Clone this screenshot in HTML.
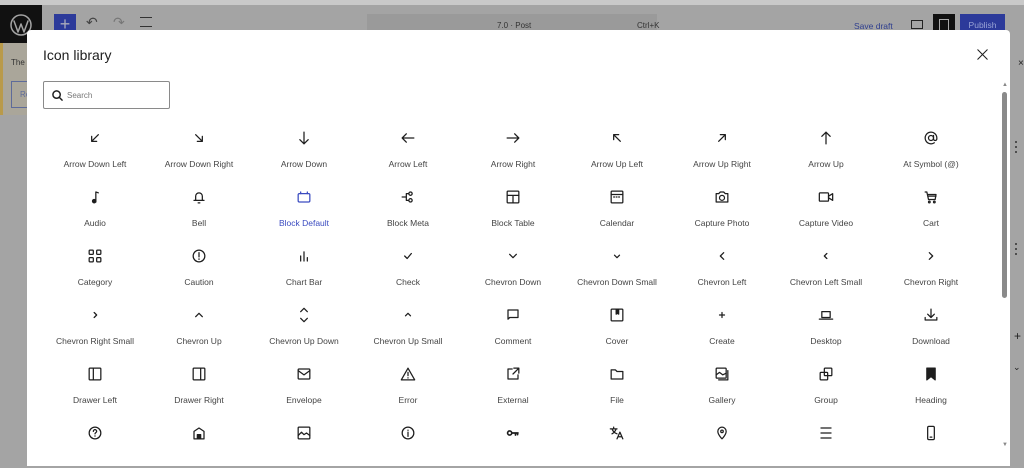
<!DOCTYPE html>
<html><head><meta charset="utf-8"><style>
*{margin:0;padding:0;box-sizing:border-box}
body{width:1024px;height:468px;overflow:hidden;background:#a4a4a4;font-family:"Liberation Sans",sans-serif;position:relative}
.abs{position:absolute}
.modal{position:absolute;left:27px;top:30px;width:983px;height:436px;background:#fff;border-radius:4px 4px 0 0}
.cell{position:absolute;width:104px;text-align:center}
.cell svg{display:block;margin:-2px auto 0;width:20px;height:20px}
.lbl{position:absolute;left:-10px;width:124px;top:29px;font-size:8.5px;color:#444;white-space:nowrap;text-align:center}
svg{fill:none;stroke:#1e1e1e;stroke-width:1.5;stroke-linecap:round;stroke-linejoin:round}
</style></head><body>
<div class="abs" style="left:0;top:0;width:1024px;height:5px;background:#c9c9c9"></div>
<div class="abs" style="left:0;top:5px;width:42px;height:38px;background:#111"></div>
<svg class="abs" style="left:9px;top:13px;width:24px;height:24px;stroke:#a4a4a4;stroke-width:1.5" viewBox="0 0 24 24"><circle cx="12" cy="12" r="10"/><path d="M5 8l4 11 3-8 3 8 4-11"/></svg>
<div class="abs" style="left:0;top:43px;width:42px;height:72px;background:#aaa69a"></div>
<div class="abs" style="left:0;top:43px;width:3px;height:72px;background:#b99a4a"></div>
<div class="abs" style="left:11px;top:58px;font-size:8px;color:#333">The</div>
<div class="abs" style="left:11px;top:81px;width:20px;height:27px;border:1px solid #5e6b9a;font-size:8px;color:#5e6b9a;padding:8px 0 0 8px">Re</div>
<div class="abs" style="left:54px;top:14px;width:22px;height:22px;background:#2c3a9a;color:#aab;font-size:18px;line-height:20px;text-align:center">+</div>
<div class="abs" style="left:86px;top:14px;font-size:14px;color:#444">↶</div>
<div class="abs" style="left:113px;top:14px;font-size:14px;color:#777">↷</div>
<div class="abs" style="left:140px;top:17px;width:12px;height:10px;border-top:1.5px solid #333;border-bottom:1.5px solid #333"></div>
<div class="abs" style="left:367px;top:14px;width:290px;height:24px;background:#9a9a9a"></div>
<div class="abs" style="left:497px;top:21px;font-size:8px;color:#333">7.0 · Post</div>
<div class="abs" style="left:637px;top:21px;font-size:8px;color:#333">Ctrl+K</div>
<div class="abs" style="left:854px;top:21px;font-size:8.5px;color:#2f3f8f">Save draft</div>
<div class="abs" style="left:911px;top:20px;width:12px;height:9px;border:1.5px solid #222"></div>
<div class="abs" style="left:933px;top:14px;width:22px;height:22px;background:#111"></div>
<div class="abs" style="left:939px;top:19px;width:10px;height:12px;border:1.5px solid #aaa"></div>
<div class="abs" style="left:960px;top:14px;width:45px;height:22px;background:#2c3a9a;color:#9aa4d6;font-size:8.5px;text-align:center;line-height:22px">Publish</div>
<div class="abs" style="left:1018px;top:58px;font-size:10px;color:#222">×</div>
<div class="modal">
<div class="abs" style="left:16px;top:17px;font-size:14px;color:#1e1e1e">Icon library</div>
<svg class="abs" style="left:950px;top:19px;width:11px;height:11px;stroke-width:1.3" viewBox="0 0 14 14"><path d="M1 1l12 12M13 1L1 13"/></svg>
<div class="abs" style="left:16px;top:51px;width:127px;height:28px;border:1px solid #8a8a8a;border-radius:2px"></div>
<svg class="abs" style="left:25px;top:60px;width:11px;height:11px;stroke-width:1.6" viewBox="0 0 12 12"><circle cx="5" cy="5" r="4"/><path d="M8 8l3 3"/></svg>
<div class="abs" style="left:40px;top:61px;font-size:8px;color:#777">Search</div>
<div class="abs" style="left:975px;top:52px;font-size:6px;color:#888">▲</div>
<div class="abs" style="left:975px;top:62px;width:5px;height:206px;background:#8a8a8a;border-radius:3px"></div>
<div class="abs" style="left:975px;top:412px;font-size:6px;color:#888">▼</div>
</div>
<svg class="abs" style="left:1014px;top:140px;width:4px;height:14px;stroke:none;fill:#333" viewBox="0 0 4 14"><circle cx="2" cy="2" r="1"/><circle cx="2" cy="7" r="1"/><circle cx="2" cy="12" r="1"/></svg>
<svg class="abs" style="left:1014px;top:242px;width:4px;height:14px;stroke:none;fill:#333" viewBox="0 0 4 14"><circle cx="2" cy="2" r="1"/><circle cx="2" cy="7" r="1"/><circle cx="2" cy="12" r="1"/></svg>
<div class="abs" style="left:1014px;top:329px;font-size:12px;color:#222">+</div>
<div class="abs" style="left:1013px;top:362px;font-size:9px;color:#222">⌄</div>

<div class="abs" style="left:27px;top:30px">
<div class="cell" style="left:16px;top:100px"><svg viewBox="0 0 24 24"><path d="M16 8L8 16M8 10v6h6"/></svg><div class="lbl">Arrow Down Left</div></div>
<div class="cell" style="left:120px;top:100px"><svg viewBox="0 0 24 24"><path d="M8 8l8 8M16 10v6h-6"/></svg><div class="lbl">Arrow Down Right</div></div>
<div class="cell" style="left:225px;top:100px"><svg viewBox="0 0 24 24"><path d="M12 5v14M7 14l5 5 5-5"/></svg><div class="lbl">Arrow Down</div></div>
<div class="cell" style="left:329px;top:100px"><svg viewBox="0 0 24 24"><path d="M19 12H5M10 7l-5 5 5 5"/></svg><div class="lbl">Arrow Left</div></div>
<div class="cell" style="left:434px;top:100px"><svg viewBox="0 0 24 24"><path d="M5 12h14M14 7l5 5-5 5"/></svg><div class="lbl">Arrow Right</div></div>
<div class="cell" style="left:538px;top:100px"><svg viewBox="0 0 24 24"><path d="M16 16L8 8M8 14V8h6"/></svg><div class="lbl">Arrow Up Left</div></div>
<div class="cell" style="left:643px;top:100px"><svg viewBox="0 0 24 24"><path d="M8 16l8-8M10 8h6v6"/></svg><div class="lbl">Arrow Up Right</div></div>
<div class="cell" style="left:747px;top:100px"><svg viewBox="0 0 24 24"><path d="M12 19V5M7 10l5-5 5 5"/></svg><div class="lbl">Arrow Up</div></div>
<div class="cell" style="left:852px;top:100px"><svg viewBox="0 0 24 24"><circle cx="12" cy="12" r="3"/><path d="M15 9v4a2 2 0 004 0v-1a7 7 0 10-3 5.7"/></svg><div class="lbl">At Symbol (@)</div></div>
<div class="cell" style="left:16px;top:159px"><svg viewBox="0 0 24 24"><path d="M13 18V6l3 1"/><circle cx="11" cy="17" r="2" fill="#1e1e1e"/></svg><div class="lbl">Audio</div></div>
<div class="cell" style="left:120px;top:159px"><svg viewBox="0 0 24 24"><path d="M8 16V11a4 4 0 018 0v5M6 16h12M11 19h2"/></svg><div class="lbl">Bell</div></div>
<div class="cell" style="left:225px;top:159px"><svg viewBox="0 0 24 24" style="stroke:#3a4bc0"><rect x="5" y="8" width="14" height="10" rx="1.5"/><path d="M8 6v2M16 6v2"/></svg><div class="lbl" style="color:#3a4bc0">Block Default</div></div>
<div class="cell" style="left:329px;top:159px"><svg viewBox="0 0 24 24"><path d="M5 12h5M10 8v8M10 8h3M10 16h3"/><circle cx="15" cy="8" r="2"/><circle cx="15" cy="16" r="2"/></svg><div class="lbl">Block Meta</div></div>
<div class="cell" style="left:434px;top:159px"><svg viewBox="0 0 24 24"><rect x="5" y="5" width="14" height="14" rx="1"/><path d="M5 10h14M12 10v9"/></svg><div class="lbl">Block Table</div></div>
<div class="cell" style="left:538px;top:159px"><svg viewBox="0 0 24 24"><rect x="5" y="5" width="14" height="14" rx="1"/><path d="M5 9h14M8 12h1M11 12h1M14 12h1"/></svg><div class="lbl">Calendar</div></div>
<div class="cell" style="left:643px;top:159px"><svg viewBox="0 0 24 24"><path d="M5 8h3l2-2h4l2 2h3v10H5z"/><circle cx="12" cy="13" r="3"/></svg><div class="lbl">Capture Photo</div></div>
<div class="cell" style="left:747px;top:159px"><svg viewBox="0 0 24 24"><rect x="4" y="7" width="11" height="10" rx="1"/><path d="M15 11l5-3v8l-5-3"/></svg><div class="lbl">Capture Video</div></div>
<div class="cell" style="left:852px;top:159px"><svg viewBox="0 0 24 24"><path d="M5 6h2l2 9h8l1-6H8M9 11h9"/><circle cx="10" cy="18" r="1"/><circle cx="16" cy="18" r="1"/></svg><div class="lbl">Cart</div></div>
<div class="cell" style="left:16px;top:218px"><svg viewBox="0 0 24 24"><rect x="5" y="5" width="5" height="5" rx="1"/><rect x="14" y="5" width="5" height="5" rx="1"/><rect x="5" y="14" width="5" height="5" rx="1"/><rect x="14" y="14" width="5" height="5" rx="1"/></svg><div class="lbl">Category</div></div>
<div class="cell" style="left:120px;top:218px"><svg viewBox="0 0 24 24"><circle cx="12" cy="12" r="7"/><path d="M12 8v5M12 15.5v.5"/></svg><div class="lbl">Caution</div></div>
<div class="cell" style="left:225px;top:218px"><svg viewBox="0 0 24 24"><path d="M8 12v6M12 7v11M16 14v4"/></svg><div class="lbl">Chart Bar</div></div>
<div class="cell" style="left:329px;top:218px"><svg viewBox="0 0 24 24"><path d="M8 12l3 3 5-6"/></svg><div class="lbl">Check</div></div>
<div class="cell" style="left:434px;top:218px"><svg viewBox="0 0 24 24"><path d="M8 10l4 4 4-4"/></svg><div class="lbl">Chevron Down</div></div>
<div class="cell" style="left:538px;top:218px"><svg viewBox="0 0 24 24"><path d="M9 11l3 3 3-3"/></svg><div class="lbl">Chevron Down Small</div></div>
<div class="cell" style="left:643px;top:218px"><svg viewBox="0 0 24 24"><path d="M14 8l-4 4 4 4"/></svg><div class="lbl">Chevron Left</div></div>
<div class="cell" style="left:747px;top:218px"><svg viewBox="0 0 24 24"><path d="M13 9l-3 3 3 3"/></svg><div class="lbl">Chevron Left Small</div></div>
<div class="cell" style="left:852px;top:218px"><svg viewBox="0 0 24 24"><path d="M10 8l4 4-4 4"/></svg><div class="lbl">Chevron Right</div></div>
<div class="cell" style="left:16px;top:277px"><svg viewBox="0 0 24 24"><path d="M11 9l3 3-3 3"/></svg><div class="lbl">Chevron Right Small</div></div>
<div class="cell" style="left:120px;top:277px"><svg viewBox="0 0 24 24"><path d="M8 14l4-4 4 4"/></svg><div class="lbl">Chevron Up</div></div>
<div class="cell" style="left:225px;top:277px"><svg viewBox="0 0 24 24"><path d="M8 8l4-4 4 4M8 16l4 4 4-4"/></svg><div class="lbl">Chevron Up Down</div></div>
<div class="cell" style="left:329px;top:277px"><svg viewBox="0 0 24 24"><path d="M9 13l3-3 3 3"/></svg><div class="lbl">Chevron Up Small</div></div>
<div class="cell" style="left:434px;top:277px"><svg viewBox="0 0 24 24"><path d="M6 17V6h12v9H8z"/></svg><div class="lbl">Comment</div></div>
<div class="cell" style="left:538px;top:277px"><svg viewBox="0 0 24 24"><rect x="5" y="5" width="14" height="14" rx="1"/><path d="M11 5h3v6l-1.5-1-1.5 1z" fill="#1e1e1e"/></svg><div class="lbl">Cover</div></div>
<div class="cell" style="left:643px;top:277px"><svg viewBox="0 0 24 24"><path d="M12 9v6M9 12h6"/></svg><div class="lbl">Create</div></div>
<div class="cell" style="left:747px;top:277px"><svg viewBox="0 0 24 24"><path d="M7 8h10v7H7zM4 17h16"/></svg><div class="lbl">Desktop</div></div>
<div class="cell" style="left:852px;top:277px"><svg viewBox="0 0 24 24"><path d="M12 5v10M8 11l4 4 4-4M5 15v3h14v-3"/></svg><div class="lbl">Download</div></div>
<div class="cell" style="left:16px;top:336px"><svg viewBox="0 0 24 24"><rect x="5" y="5" width="14" height="14" rx="1"/><path d="M10 5v14"/></svg><div class="lbl">Drawer Left</div></div>
<div class="cell" style="left:120px;top:336px"><svg viewBox="0 0 24 24"><rect x="5" y="5" width="14" height="14" rx="1"/><path d="M14 5v14"/></svg><div class="lbl">Drawer Right</div></div>
<div class="cell" style="left:225px;top:336px"><svg viewBox="0 0 24 24"><rect x="5" y="6" width="14" height="12" rx="1"/><path d="M5 8l7 5 7-5"/></svg><div class="lbl">Envelope</div></div>
<div class="cell" style="left:329px;top:336px"><svg viewBox="0 0 24 24"><path d="M12 5l8 14H4z M12 10v4M12 16.5v.3"/></svg><div class="lbl">Error</div></div>
<div class="cell" style="left:434px;top:336px"><svg viewBox="0 0 24 24"><path d="M11 6H6v12h12v-5M13 5h6v6M19 5l-7 7"/></svg><div class="lbl">External</div></div>
<div class="cell" style="left:538px;top:336px"><svg viewBox="0 0 24 24"><path d="M5 7h5l2 2h7v9H5z"/></svg><div class="lbl">File</div></div>
<div class="cell" style="left:643px;top:336px"><svg viewBox="0 0 24 24"><rect x="5" y="5" width="12" height="12" rx="1"/><path d="M5 13l4-3 4 3 4-2M19 8v11H8"/></svg><div class="lbl">Gallery</div></div>
<div class="cell" style="left:747px;top:336px"><svg viewBox="0 0 24 24"><rect x="10" y="5" width="9" height="9" rx="1"/><rect x="5" y="10" width="9" height="9" rx="1"/></svg><div class="lbl">Group</div></div>
<div class="cell" style="left:852px;top:336px"><svg viewBox="0 0 24 24"><path d="M7 5h10v14l-5-4-5 4z" fill="#1e1e1e"/></svg><div class="lbl">Heading</div></div>
<div class="cell" style="left:16px;top:395px"><svg viewBox="0 0 24 24"><circle cx="12" cy="12" r="7"/><path d="M10 10a2 2 0 114 0c0 1.5-2 1.5-2 3M12 15.5v.3"/></svg></div>
<div class="cell" style="left:120px;top:395px"><svg viewBox="0 0 24 24"><path d="M6 19V10l6-4 6 4v9z"/><path d="M10 19v-5h4v5" fill="#1e1e1e"/></svg></div>
<div class="cell" style="left:225px;top:395px"><svg viewBox="0 0 24 24"><rect x="5" y="5" width="14" height="14" rx="1"/><path d="M5 15l4-4 3 3 3-2 4 3"/></svg></div>
<div class="cell" style="left:329px;top:395px"><svg viewBox="0 0 24 24"><circle cx="12" cy="12" r="7"/><path d="M12 11v5M12 8.5v.3"/></svg></div>
<div class="cell" style="left:434px;top:395px"><svg viewBox="0 0 24 24"><circle cx="8" cy="12" r="2.5" stroke-width="2"/><path d="M10.5 12H18M15 12v2.5M17.5 12v2" stroke-width="2"/></svg></div>
<div class="cell" style="left:538px;top:395px"><svg viewBox="0 0 24 24"><path d="M4 7h8M8 5v2M6 7c1 3 3 5 6 6M11 7c-1 3-3 5-5 6M12 19l3.5-8 3.5 8M13.2 16.5h4.6"/></svg></div>
<div class="cell" style="left:643px;top:395px"><svg viewBox="0 0 24 24"><path d="M12 19s-5-5-5-9a5 5 0 0110 0c0 4-5 9-5 9z"/><circle cx="12" cy="10" r="1.5"/></svg></div>
<div class="cell" style="left:747px;top:395px"><svg viewBox="0 0 24 24"><path d="M6 6h12M6 12h12M6 18h12"/></svg></div>
<div class="cell" style="left:852px;top:395px"><svg viewBox="0 0 24 24"><rect x="8" y="4" width="8" height="16" rx="1.5"/><path d="M11 17h2"/></svg></div>
</div>
</body></html>
